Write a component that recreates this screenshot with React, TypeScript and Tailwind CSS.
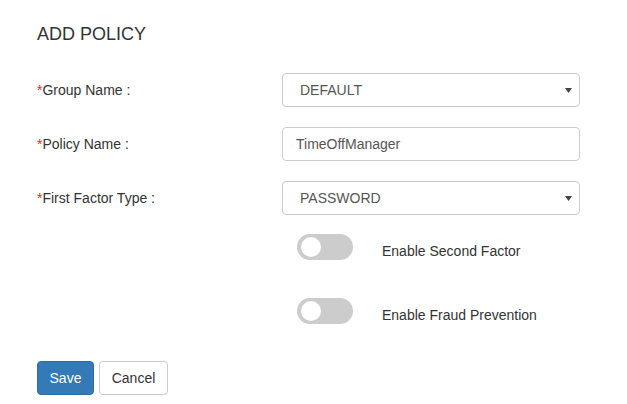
import { ChangeEvent, useState } from "react";

const font = { fontFamily: '"Liberation Sans", Arial, sans-serif' };

function Caret() {
  return (
    <svg width="7" height="5" viewBox="0 0 7 5" className="absolute right-[8px] top-[15px]">
      <path d="M0 0h7L3.5 5z" fill="#444" />
    </svg>
  );
}

function Toggle({ on, onChange }: { on: boolean; onChange: () => void }) {
  return (
    <button
      type="button"
      onClick={onChange}
      className={`relative w-[56px] h-[26px] rounded-full shrink-0 ${on ? "bg-[#337ab7]" : "bg-[#ccc]"}`}
    >
      <span
        className={`absolute top-[3px] w-[20px] h-[20px] rounded-full bg-white ${on ? "left-[33px]" : "left-[4px]"}`}
      />
    </button>
  );
}

function Label({ text }: { text: string }) {
  return (
    <label className="w-[245px] text-[14px] text-[#333]">
      <span className="text-[#e0262c]">*</span>
      {text}
    </label>
  );
}

export default function App() {
  const [group, setGroup] = useState("DEFAULT");
  const [policy, setPolicy] = useState("TimeOffManager");
  const [factor, setFactor] = useState("PASSWORD");
  const [second, setSecond] = useState(false);
  const [fraud, setFraud] = useState(false);

  return (
    <div className="w-[627px] h-[404px] bg-white pl-[37px] pt-[24px]" style={font}>
      <h2 className="text-[18px] leading-[20px] text-[#333]">ADD POLICY</h2>

      <div className="mt-[29px] flex flex-col gap-[20px]">
        <div className="flex items-center">
          <Label text="Group Name :" />
          <div className="relative w-[298px]">
            <select
              value={group}
              onChange={(e: ChangeEvent<HTMLSelectElement>) => setGroup(e.target.value)}
              className="appearance-none w-full h-[34px] border border-[#ccc] rounded-[4px] pl-[17px] text-[14px] text-[#555] bg-white"
            >
              <option>DEFAULT</option>
            </select>
            <Caret />
          </div>
        </div>

        <div className="flex items-center">
          <Label text="Policy Name :" />
          <input
            value={policy}
            onChange={(e) => setPolicy(e.target.value)}
            className="w-[298px] h-[34px] border border-[#ccc] rounded-[4px] px-[13px] text-[14px] text-[#555]"
          />
        </div>

        <div className="flex items-center">
          <Label text="First Factor Type :" />
          <div className="relative w-[298px]">
            <select
              value={factor}
              onChange={(e: ChangeEvent<HTMLSelectElement>) => setFactor(e.target.value)}
              className="appearance-none w-full h-[34px] border border-[#ccc] rounded-[4px] pl-[17px] text-[14px] text-[#555] bg-white"
            >
              <option>PASSWORD</option>
            </select>
            <Caret />
          </div>
        </div>
      </div>

      <div className="ml-[260px] mt-[19px] flex flex-col gap-[38px]">
        <div className="flex items-start">
          <Toggle on={second} onChange={() => setSecond(!second)} />
          <span className="ml-[29px] mt-[9px] text-[14px] leading-[16px] text-[#333]">Enable Second Factor</span>
        </div>
        <div className="flex items-start">
          <Toggle on={fraud} onChange={() => setFraud(!fraud)} />
          <span className="ml-[29px] mt-[9px] text-[14px] leading-[16px] text-[#333]">Enable Fraud Prevention</span>
        </div>
      </div>

      <div className="mt-[37px] flex gap-[5px]">
        <button className="w-[57px] h-[34px] rounded-[4px] bg-[#337ab7] border border-[#2e6da4] text-white text-[14px]">
          Save
        </button>
        <button className="w-[69px] h-[34px] rounded-[4px] bg-white border border-[#ccc] text-[#333] text-[14px]">
          Cancel
        </button>
      </div>
    </div>
  );
}
